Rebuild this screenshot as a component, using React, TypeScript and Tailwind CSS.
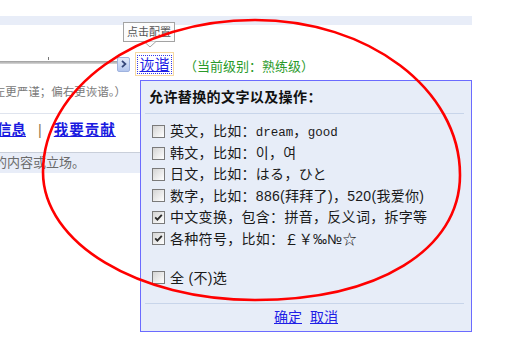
import React from 'react'

const cjk = "font-['Liberation_Sans','Noto_Sans_CJK_SC','Noto_Sans_CJK_KR',sans-serif]"

function Box({ checked }: { checked?: boolean }) {
  return (
    <span className="flex h-[13px] w-[13px] shrink-0 items-center justify-center border border-[#7a7a7a] bg-gradient-to-br from-[#d4d4d4] to-white">
      {checked && (
        <svg width="9" height="9" viewBox="0 0 9 9">
          <path d="M1.2 4.4 L3.4 6.7 L7.8 1.8" fill="none" stroke="#2b2b2b" strokeWidth="1.8" />
        </svg>
      )}
    </span>
  )
}

function Row({ checked, children }: { checked?: boolean; children: React.ReactNode }) {
  return (
    <div className="flex h-[21.4px] items-center gap-[5px] whitespace-nowrap">
      <Box checked={checked} />
      <span className="text-[14px] leading-[20px] tracking-[0.3px] text-[#1a1a1a]">{children}</span>
    </div>
  )
}

const mono = "font-['Liberation_Mono',monospace] text-[12.5px] tracking-normal"

export default function App() {
  return (
    <div className={`relative h-[352px] w-[510px] overflow-hidden bg-white ${cjk}`}>
      <div className="w-[472px] pt-[16px]">
        {/* top band */}
        <div className="h-[9px] bg-[#e8edf8]" />
        <div className="h-[27px]" />

        {/* slider row */}
        <div className="flex h-[24px] items-center">
          <div className="relative mt-[-3px] h-[3px] w-[117px] bg-gradient-to-b from-[#9c9c9c] to-[#dadada]">
            <span className="absolute left-[48px] top-[-4px] h-[3px] w-px bg-[#777]" />
          </div>
          <span className="flex h-[15px] w-[13px] items-center justify-center rounded-[2px] border border-[#9fb3df] bg-gradient-to-b from-[#e4ecfb] to-[#b3c6ee]">
            <svg width="6" height="8" viewBox="0 0 6 8">
              <path d="M1 0.8 L4.4 4 L1 7.2" fill="none" stroke="#36477a" strokeWidth="1.8" />
            </svg>
          </span>
          <span className="ml-[5px] flex h-[24px] w-[39px] items-center justify-center border border-[#f6d9a2]">
            <a className="px-[1px] text-[15px] leading-[17px] text-[#1f1fe6] underline outline-1 outline-dotted outline-[#3a3ae8]">
              诙谐
            </a>
          </span>
          <span className="ml-[10px] mt-[5px] text-[13px] text-[#2a9a2a]">（当前级别：熟练级）</span>
        </div>

        {/* page content under the popup */}
        <div className="w-[140px] overflow-hidden whitespace-nowrap">
          <div className="flex h-[38px] justify-end border-b border-[#dfe4ee] pr-[14px] pt-[6px] text-[11.5px] leading-[20px] text-[#7a7a7a]">
            <span className="shrink-0">（偏左更严谨；偏右更诙谐。）</span>
          </div>
          <div className="flex h-[39px] border-b border-[#c9cfda] pt-[6px] text-[14.5px] font-bold leading-[20px]">
            <a className="ml-[-3px] text-[#1a1ae0] underline">信息</a>
            <span className="mx-[12px] font-normal text-[#8a7a50]">|</span>
            <a className="tracking-[1px] text-[#1a1ae0] underline">我要贡献</a>
          </div>
          <div className="flex h-[20px] justify-end bg-[#e8edf8] pr-[55px] text-[13px] leading-[20px] text-[#6a6a6a]">
            <span className="shrink-0">的内容或立场。</span>
          </div>
        </div>
      </div>

      {/* tooltip */}
      <div className="absolute left-[123px] top-[22px]">
        <div className="flex h-[20px] w-[52px] items-center justify-center border border-[#a3a3a3] bg-[#fcfcfc] text-[11px] text-[#555]">
          点击配置
        </div>
        <svg className="absolute left-[21px] top-[19px]" width="12" height="7" viewBox="0 0 12 7">
          <path d="M0 0.5 L6 6 L12 0.5" fill="#fcfcfc" stroke="#a3a3a3" strokeWidth="1" />
        </svg>
      </div>

      {/* popup panel */}
      <div className="absolute left-[140px] top-[80px] w-[332px] border border-[#6b6bff] bg-[#e7edf8]">
        <div className="flex h-[32px] items-center pl-[8px] text-[14px] font-bold tracking-[0.4px] text-[#111]">
          允许替换的文字以及操作：
        </div>
        <div className="ml-[4px] mr-[7px] h-px bg-[#c8d5ea]" />
        <div className="pl-[11px] pt-[7px]">
          <Row>英文，比如：<span className={mono}>dream</span>，<span className={mono}>good</span></Row>
          <Row>韩文，比如：이，여</Row>
          <Row>日文，比如：はる，ひと</Row>
          <Row>数字，比如：886(拜拜了)，520(我爱你)</Row>
          <Row checked>中文变换，包含：拼音，反义词，拆字等</Row>
          <Row checked>各种符号，比如：￡￥‰№☆</Row>
          <div className="h-[17.6px]" />
          <Row>全 (不)选</Row>
        </div>
        <div className="ml-[4px] mr-[7px] mt-[14.6px] h-px bg-[#c8d5ea]" />
        <div className="flex h-[27px] items-center justify-center gap-[8px] text-[14px] text-[#1f1fe6]">
          <a className="underline">确定</a>
          <a className="underline">取消</a>
        </div>
      </div>

      {/* red hand-drawn circle */}
      <svg className="pointer-events-none absolute inset-0" width="510" height="352" viewBox="0 0 510 352">
        <path
          d="M255 20 C368 20 460 89 460 175 C460 250 378 300 255 300 C138 300 43 243 43 172 C43 88 138 20 255 20 Z"
          fill="none"
          stroke="#ff0000"
          strokeWidth="2.6"
        />
      </svg>
    </div>
  )
}
